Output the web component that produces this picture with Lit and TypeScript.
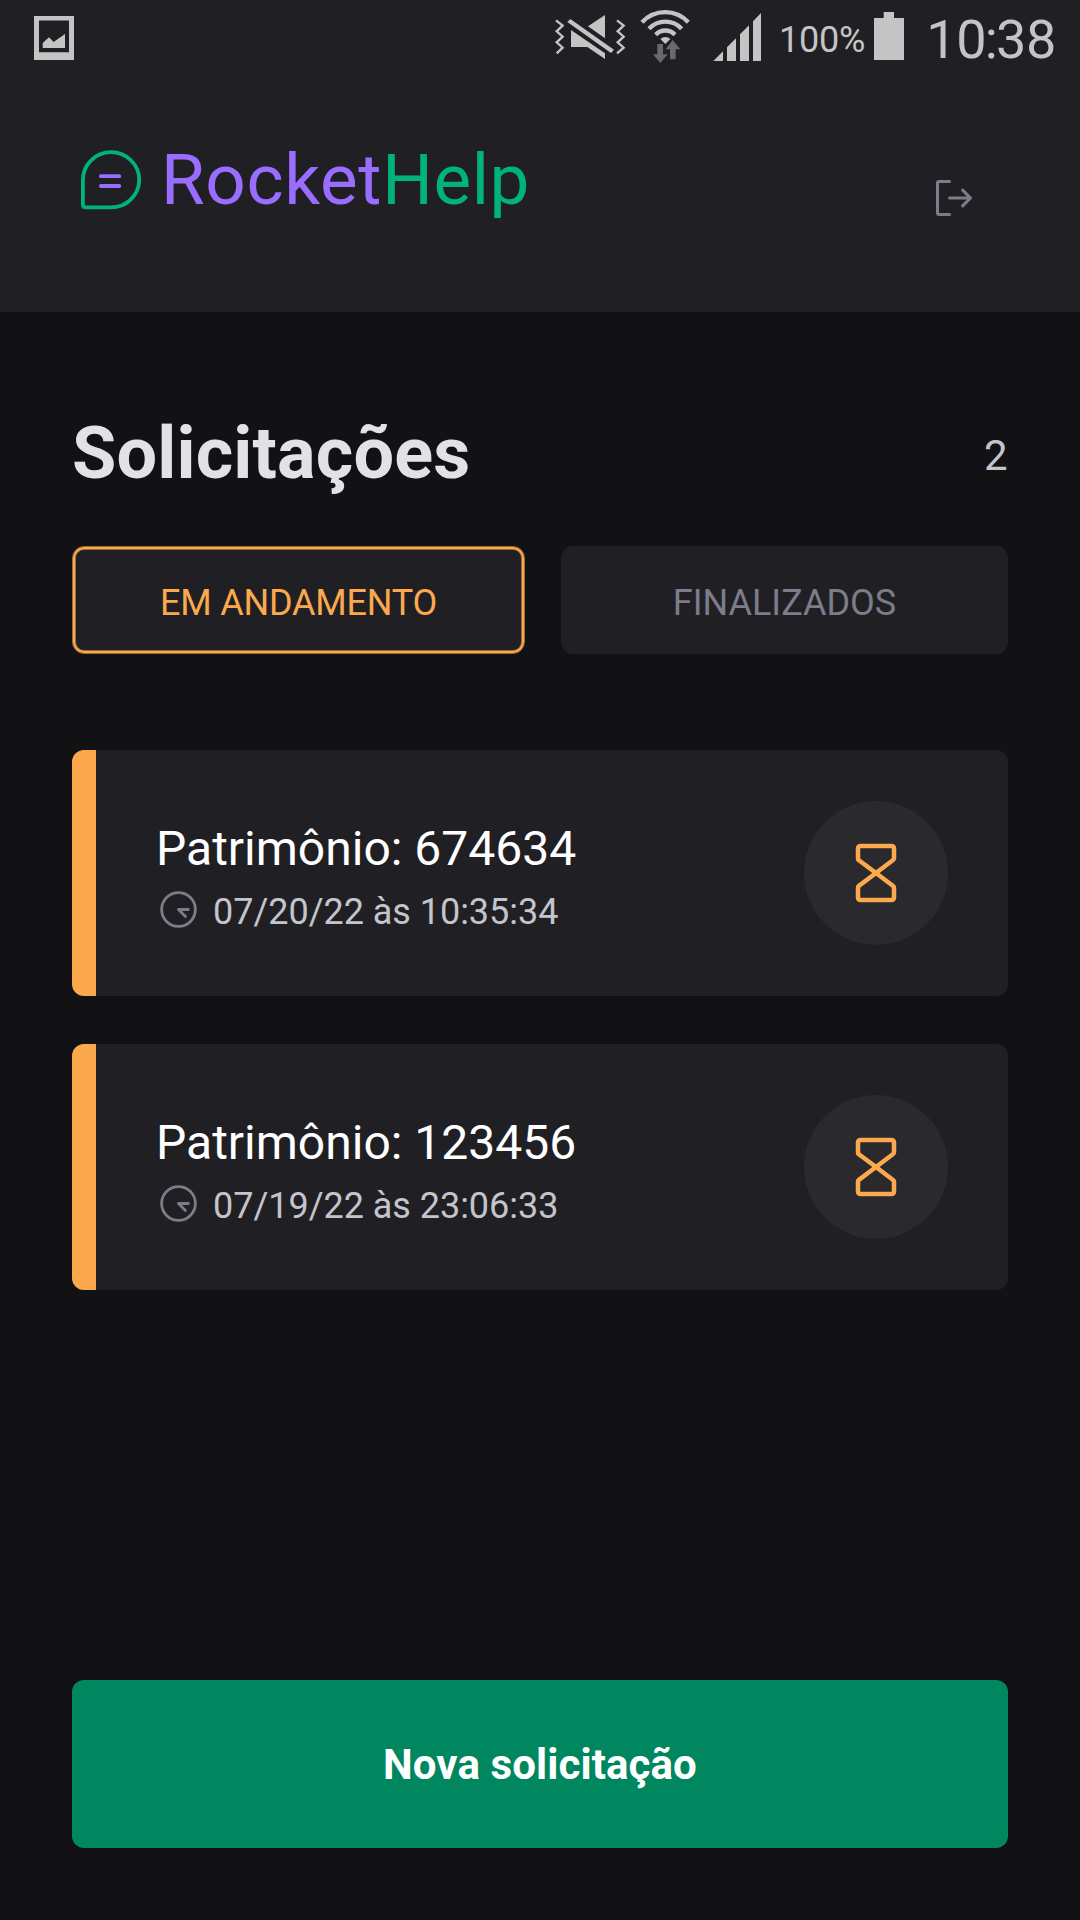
import { LitElement, html, css, svg } from "lit";
import { customElement, property, state } from "lit/decorators.js";
import { classMap } from "lit/directives/class-map.js";

interface Order {
  patrimony: string;
  when: string;
  status: "open" | "closed";
}

@customElement("status-bar")
class StatusBar extends LitElement {
  static styles = css`
    :host {
      display: flex;
      height: 72px;
      padding: 0 24px 0 34px;
      justify-content: space-between;
      color: #c4c4c4;
      font-family: Roboto, "Noto Sans", sans-serif;
    }
    svg {
      display: block;
      flex: none;
    }
    .side {
      display: flex;
    }
    .level {
      box-sizing: border-box;
      width: 94px;
      padding-left: 1px;
      font-size: 36px;
      line-height: 80px;
      letter-spacing: -0.2px;
      white-space: nowrap;
    }
    .clock {
      width: 135px;
      margin-left: 17px;
      font-size: 54px;
      line-height: 79px;
      letter-spacing: -0.3px;
      text-align: right;
      white-space: nowrap;
    }
    .colon {
      margin: 0 -1.6px;
    }
  `;

  render() {
    return html`
      <div class="side">
        <svg width="40" height="72" viewBox="34 0 40 72" fill="#c4c4c4">
          <path fill-rule="evenodd" d="M34 16H74V60H34ZM39 20.5V52.3H69V20.5Z" />
          <path d="M42.7 48V43L49 37.2L53.6 42L65 34V48Z" />
        </svg>
      </div>
      <div class="side">
        <svg width="226" height="72" viewBox="552 0 226 72" fill="#c4c4c4">
          <g transform="translate(540 0) scale(.33333)">
            <g fill="none" stroke="#c4c4c4" stroke-width="7">
              <path d="M48 61L68 77L50 94L68 110L50 127L68 143L50 160" />
              <path d="M231 61L251 77L233 94L251 110L233 127L251 143L231 160" />
            </g>
            <path d="M82 66L91 57L222 149L213 159Z" />
            <path d="M144 79L195 45V115Z" />
            <path d="M93 90L195 160V177L142 141H93Z" />
            <g fill="none" stroke="#c4c4c4" stroke-width="13">
              <path d="M306 67A94 94 0 0 1 445 67" />
              <path d="M327 86A67 67 0 0 1 425 86" />
              <path d="M347 104A40 40 0 0 1 405 104" />
            </g>
            <path d="M376 132L361 117A21 21 0 0 1 391 117Z" />
            <path fill="#69696b" d="M352 132H369V163H383L361 189L339 163H352Z" />
            <path fill="#69696b" d="M390 178H407V148H421L398 120L377 148H390Z" />
            <path d="M520 183L549 154V183ZM561 183V142L588 115V183ZM600 183V103L627 76V183ZM639 183V64L663 39V183Z" />
          </g>
        </svg>
        <span class="level">100%</span>
        <svg width="32" height="72" viewBox="872 0 32 72" fill="#c4c4c4">
          <path d="M874 18H883.7V12H894V18H904V60H874Z" />
        </svg>
        <span class="clock">10<span class="colon">:</span>38</span>
      </div>
    `;
  }
}

@customElement("order-card")
class OrderCard extends LitElement {
  @property({ attribute: false }) order!: Order;

  static styles = css`
    :host {
      display: flex;
      height: 246px;
      border-radius: 12px;
      overflow: hidden;
      background: #202024;
    }
    svg {
      display: block;
      flex: none;
    }
    .stripe {
      width: 24px;
      background: #fba94c;
    }
    .info {
      flex: 1;
      padding: 70px 0 0 60px;
    }
    .title {
      color: #fff;
      font-size: 48px;
      line-height: 58px;
    }
    .meta {
      display: flex;
      align-items: flex-start;
      gap: 12px;
      margin-top: 12px;
      color: #c4c4cc;
      font-size: 36px;
      line-height: 44px;
      letter-spacing: -0.03px;
    }
    .meta svg {
      margin-top: -3px;
    }
    .badge {
      display: flex;
      align-items: center;
      justify-content: center;
      align-self: center;
      width: 144px;
      height: 144px;
      margin-right: 60px;
      border-radius: 50%;
      background: #29292e;
    }
  `;

  render() {
    const half = svg`<path d="M128 128L67.2 82.4A8 8 0 0 1 64 76V40a8 8 0 0 1 8-8H184a8 8 0 0 1 8 8V75.6a8.1 8.1 0 0 1-3.2 6.4Z" />`;
    return html`
      <div class="stripe"></div>
      <div class="info">
        <div class="title">Patrimônio: ${this.order.patrimony}</div>
        <div class="meta">
          <svg width="45" height="45" viewBox="0 0 256 256" fill="none" stroke="#7c7c8a" stroke-width="16" stroke-linecap="round" stroke-linejoin="round">
            <circle cx="128" cy="128" r="96" />
            <path d="M184 128H128L167.6 167.6" />
          </svg>
          <span>${this.order.when}</span>
        </div>
      </div>
      <div class="badge">
        <svg width="72" height="72" viewBox="0 0 256 256" fill="none" stroke="#fba94c" stroke-width="16" stroke-linejoin="round">
          ${half}
          <g transform="translate(0 256) scale(1 -1)">${half}</g>
        </svg>
      </div>
    `;
  }
}

@customElement("app-root")
class AppRoot extends LitElement {
  @state() private filter: "open" | "closed" = "open";

  private orders: Order[] = [
    { patrimony: "674634", when: "07/20/22 às 10:35:34", status: "open" },
    { patrimony: "123456", when: "07/19/22 às 23:06:33", status: "open" },
  ];

  static styles = css`
    :host {
      display: flex;
      flex-direction: column;
      box-sizing: border-box;
      width: 1080px;
      height: 1920px;
      overflow: hidden;
      background: #121214;
      font-family: Roboto, "Noto Sans", sans-serif;
    }
    svg {
      display: block;
      flex: none;
    }
    button {
      box-sizing: border-box;
      margin: 0;
      border: 0;
      font-family: inherit;
    }
    .header {
      height: 312px;
      background: #202024;
    }
    .bar {
      display: flex;
      align-items: flex-start;
      justify-content: space-between;
      padding: 72px 102px 0 78px;
    }
    .brand {
      display: flex;
      align-items: center;
      gap: 17px;
      height: 72px;
      font-size: 71px;
      line-height: 72px;
      letter-spacing: 0.6px;
      color: #00b37e;
      white-space: nowrap;
    }
    .accent {
      color: #996dff;
    }
    .logout {
      margin-top: 30px;
    }
    .content {
      display: flex;
      flex: 1;
      flex-direction: column;
      padding: 96px 72px 72px;
    }
    .heading {
      display: flex;
      align-items: flex-start;
      justify-content: space-between;
      height: 94px;
    }
    .title {
      margin: 0;
      color: #e1e1e6;
      font-size: 72px;
      font-weight: 700;
      line-height: 92px;
      letter-spacing: 0.15px;
    }
    .count {
      padding-right: 0.5px;
      color: #c4c4cc;
      font-size: 42px;
      line-height: 96px;
    }
    .tabs {
      display: flex;
      gap: 36px;
      margin-top: 44px;
    }
    .tab {
      flex: 1 1 0;
      height: 108px;
      padding: 5px 0 0;
      border-radius: 12px;
      background: #202024;
      color: #7c7c8a;
      font-size: 36px;
    }
    .tab.active {
      flex: 0 0 453px;
      border: 1px solid #9b6c38;
      box-shadow: inset 0 0 0 2px #fba94c, inset 0 0 0 3px #9b6c38;
      color: #fba94c;
      letter-spacing: -0.2px;
    }
    .list {
      display: flex;
      flex-direction: column;
      gap: 48px;
      margin-top: 96px;
    }
    .primary {
      height: 168px;
      margin-top: auto;
      border-radius: 12px;
      background: #00875f;
      color: #fff;
      font-size: 42px;
      font-weight: 700;
      letter-spacing: 0.1px;
    }
  `;

  private tab(value: "open" | "closed", label: string) {
    return html`<button
      class=${classMap({ tab: true, active: this.filter === value })}
      @click=${() => (this.filter = value)}
    >${label}</button>`;
  }

  render() {
    const shown = this.orders.filter((o) => o.status === this.filter);
    return html`
      <header class="header">
        <status-bar></status-bar>
        <div class="bar">
          <div class="brand">
            <svg width="66" height="66" viewBox="78 147 66 66" fill="none" stroke-width="3.8" stroke-linecap="round" stroke-linejoin="round">
              <path stroke="#00b37e" d="M111 207.4H85.3A2.4 2.4 0 0 1 82.9 205V180A28 27.8 0 0 1 110.9 152.2A28.2 27.6 0 0 1 139.2 179.8A28.2 27.6 0 0 1 111 207.4Z" />
              <path stroke="#996dff" d="M100.9 176.2H119.3M100.9 186H119.3" />
            </svg>
            <div><span class="accent">Rocket</span><span>Help</span></div>
          </div>
          <svg class="logout" width="48" height="48" viewBox="0 0 256 256" fill="none" stroke="#7c7c8a" stroke-width="16" stroke-linecap="round" stroke-linejoin="round">
            <path d="M174 86L216 128L174 170M104 128H216M104 216H48a8 8 0 0 1-8-8V48a8 8 0 0 1 8-8h56" />
          </svg>
        </div>
      </header>
      <main class="content">
        <div class="heading">
          <h1 class="title">Solicitações</h1>
          <span class="count">${shown.length}</span>
        </div>
        <div class="tabs">
          ${this.tab("open", "EM ANDAMENTO")}${this.tab("closed", "FINALIZADOS")}
        </div>
        <div class="list">
          ${shown.map((o) => html`<order-card .order=${o}></order-card>`)}
        </div>
        <button class="primary">Nova solicitação</button>
      </main>
    `;
  }
}
